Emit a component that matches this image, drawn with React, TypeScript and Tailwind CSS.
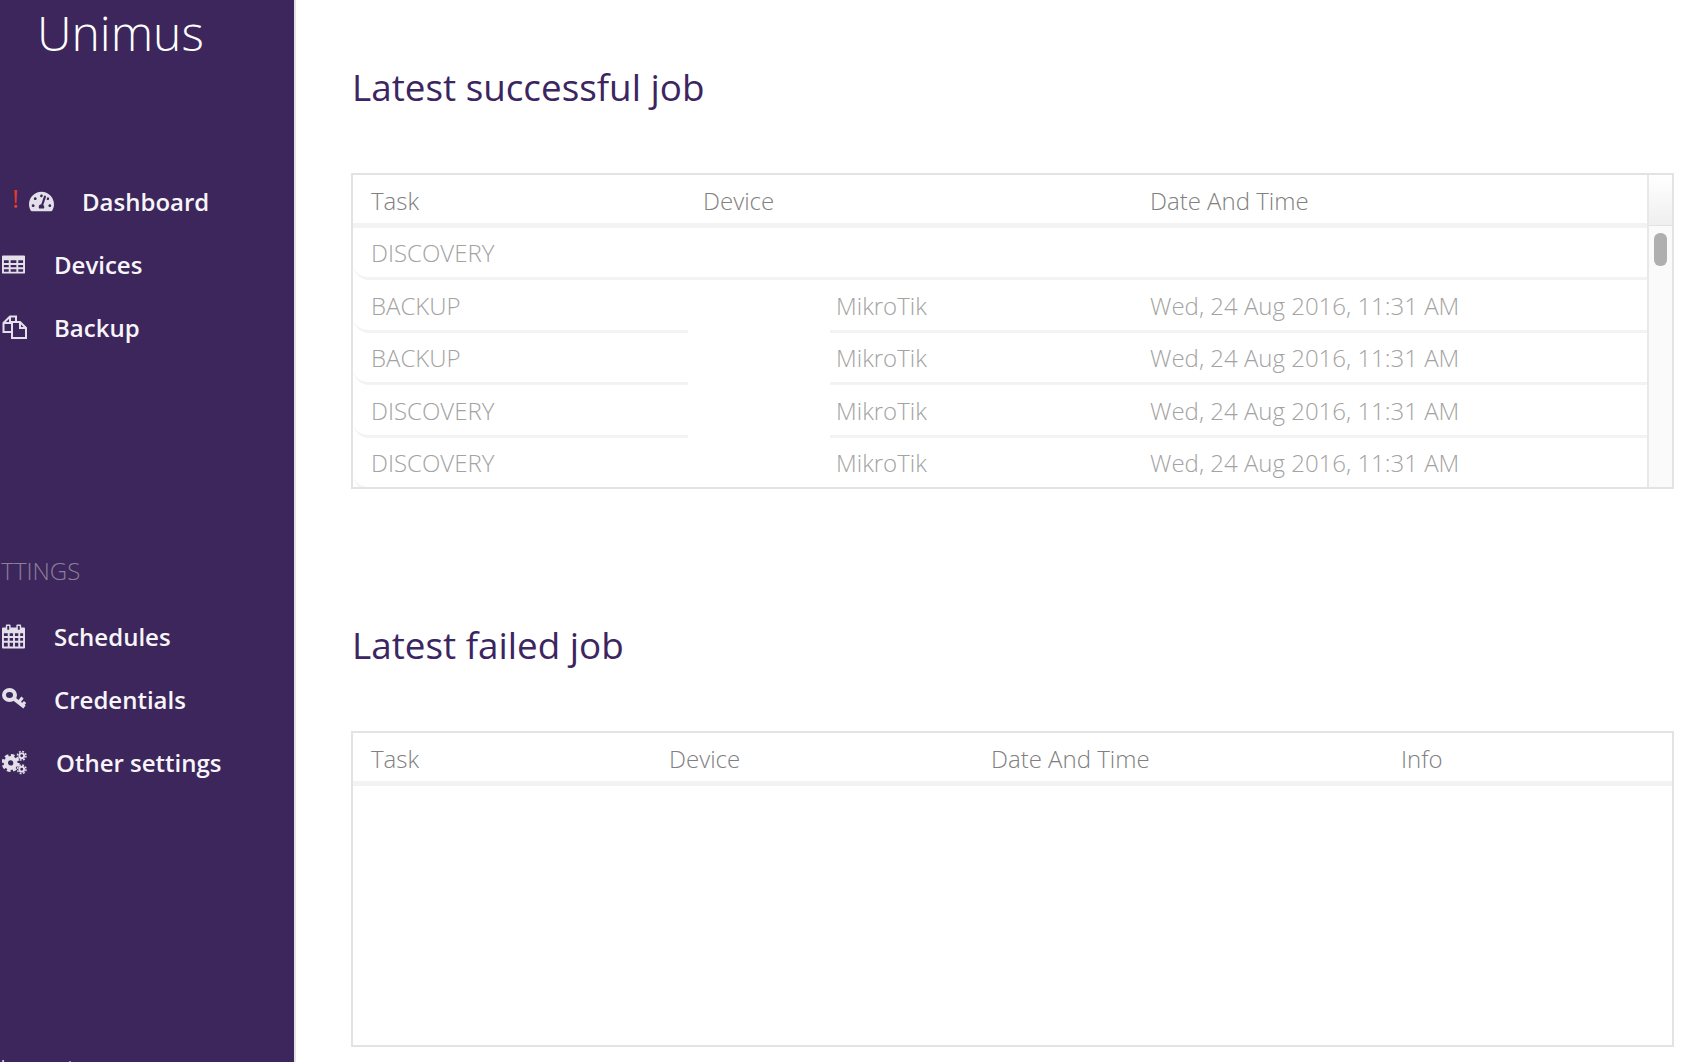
import React from "react";
import { FaTachometerAlt } from "react-icons/fa";

function TableIcon() {
    return (
        <svg viewBox="0 0 24 19" className="w-[23px] h-[19px]" fill="#e4e0ea">
            <path fillRule="evenodd" d="M1 0h22a1 1 0 0 1 1 1v17a1 1 0 0 1-1 1H1a1 1 0 0 1-1-1V1a1 1 0 0 1 1-1ZM2 5v3h5V5H2Zm7 0v3h6V5H9Zm8 0v3h5V5h-5ZM2 10v2.500h5V10H2Zm7 0v2.500h6V10H9Zm8 0v2.500h5V10h-5ZM2 14.500V17h5v-2.500H2Zm7 0V17h6v-2.500H9Zm8 0V17h5v-2.500h-5Z" />
        </svg>
    );
}

function FilesIcon() {
    return (
        <svg viewBox="0 0 25 24" className="w-[25px] h-[24px] -mt-[2px]" fill="none" stroke="#e4e0ea" strokeWidth="2">
            <path d="M9 17H1.500V8L8 1.500h6V6" />
            <path d="M8 2v6H2" />
            <path d="M10 7h8l6 6v10H10Z" />
            <path d="M18 7v6h6" />
        </svg>
    );
}

function CalendarIcon() {
    return (
        <svg viewBox="0 0 24 25" className="w-[23px] h-[25px]" fill="#e4e0ea">
            <path fillRule="evenodd" d="M5 0h3a1 1 0 0 1 1 1v2h6V1a1 1 0 0 1 1-1h3a1 1 0 0 1 1 1v2h3a1 1 0 0 1 1 1v20a1 1 0 0 1-1 1H1a1 1 0 0 1-1-1V4a1 1 0 0 1 1-1h3V1a1 1 0 0 1 1-1ZM5.500 1.500v4h2v-4h-2Zm11 0v4h2v-4h-2ZM2 9v3h4V9H2Zm6 0v3h3.500V9H8Zm5.500 0v3H17V9h-3.500ZM19 9v3h3V9h-3ZM2 14v3h4v-3H2Zm6 0v3h3.500v-3H8Zm5.500 0v3H17v-3h-3.500ZM19 14v3h3v-3h-3ZM2 19v4h4v-4H2Zm6 0v4h3.500v-4H8Zm5.500 0v4H17v-4h-3.500ZM19 19v4h3v-4h-3Z" />
        </svg>
    );
}

function KeyIcon() {
    return (
        <svg viewBox="0 0 24 21" className="w-[24px] h-[21px] -mt-[2px]" fill="none" stroke="#e4e0ea">
            <ellipse cx="7.500" cy="7" rx="5.500" ry="5" strokeWidth="4" />
            <path d="m11 10 11.500 9" strokeWidth="3.600" />
            <path d="m16.500 14.500 4-5M20 17.500l3-3.500" strokeWidth="3" />
        </svg>
    );
}

function CogsIcon() {
    return (
        <svg viewBox="0 0 26 25" className="w-[26px] h-[25px]" fill="none" stroke="#e4e0ea">
            <circle cx="9" cy="13" r="5" strokeWidth="4.500" />
            <circle cx="9" cy="13" r="8" strokeWidth="2.800" strokeDasharray="3.800 2.480" />
            <circle cx="20.500" cy="5.500" r="2.500" strokeWidth="2" />
            <circle cx="20.500" cy="5.500" r="4.500" strokeWidth="1.500" strokeDasharray="2 1.530" />
            <circle cx="20.500" cy="19.500" r="2.500" strokeWidth="2" />
            <circle cx="20.500" cy="19.500" r="4.500" strokeWidth="1.500" strokeDasharray="2 1.530" />
        </svg>
    );
}

const mainNav = [
    { label: "Devices", icon: <TableIcon /> },
    { label: "Backup", icon: <FilesIcon /> },
];

const settingsNav = [
    { label: "Schedules", icon: <CalendarIcon />, textClass: "ml-[27px]" },
    { label: "Credentials", icon: <KeyIcon />, textClass: "ml-[27px]" },
    { label: "Other settings", icon: <CogsIcon />, textClass: "ml-[29px]" },
];

const jobs = [
    { task: "BACKUP", host: "MikroTik" },
    { task: "BACKUP", host: "MikroTik" },
    { task: "DISCOVERY", host: "MikroTik" },
    { task: "DISCOVERY", host: "MikroTik" },
];

const jobDate = "Wed, 24 Aug 2016, 11:31 AM";

export default function App() {
    return (
        <div className="flex h-[1062px] overflow-hidden bg-white font-['Open_Sans',sans-serif]">
            {/* SIDEBAR */}
            <aside className="w-[296px] shrink-0 flex flex-col overflow-hidden bg-[#3c265c] border-r-2 border-[#e3e3e3] text-[#f7f5f9]">
                <div className="h-[170px] shrink-0 pl-[37px]">
                    <div className="text-[48px] leading-[65px] font-light text-white">Unimus</div>
                </div>
                <nav className="flex flex-col">
                    <div className="h-[63px] flex items-center pl-[12px] text-[24px] font-semibold">
                        <span className="w-[10px] text-[26px] font-medium text-[#e8392f] -mt-[6px]">!</span>
                        <FaTachometerAlt className="ml-[7px] text-[25px] text-[#e4e0ea]" />
                        <span className="ml-[28px]">Dashboard</span>
                    </div>
                    {mainNav.map((item) => (
                        <div key={item.label} className="h-[63px] flex items-center pl-[2px] text-[24px] font-semibold">
                            <span className="w-[25px] flex justify-start">{item.icon}</span>
                            <span className="ml-[27px]">{item.label}</span>
                        </div>
                    ))}
                </nav>
                <div className="mt-[194px] h-[36px] -ml-[25px] whitespace-nowrap text-[24px] leading-[36px] font-light text-[#8a8098]">SETTINGS</div>
                <nav className="flex flex-col mt-[16px]">
                    {settingsNav.map((item) => (
                        <div key={item.label} className="h-[63px] flex items-center pl-[2px] text-[24px] font-semibold">
                            <span className="w-[25px] flex justify-start">{item.icon}</span>
                            <span className={item.textClass}>{item.label}</span>
                        </div>
                    ))}
                </nav>
                <div className="mt-[258px] text-[24px] leading-[32px] font-light text-white">Logout</div>
            </aside>

            {/* CONTENT */}
            <main className="flex-1 pl-[55px] pr-[28px]">
                <h1 className="mt-[62px] h-[50px] pl-[1px] text-[36.800px] leading-[50px] font-normal text-[#3c2560]">Latest successful job</h1>

                <div className="mt-[61px] h-[316px] flex border-2 border-[#e3e3e3] text-[24px] overflow-hidden">
                    <div className="flex-1 flex flex-col">
                        <div className="h-[53px] shrink-0 flex items-center border-b-[5px] border-[#f3f3f3] pl-[18px] pt-[4px] text-[#808080] font-light">
                            <span className="w-[332px]">Task</span>
                            <span className="w-[447px]">Device</span>
                            <span>Date And Time</span>
                        </div>
                        <div className="h-[52px] shrink-0 flex items-center border-b-[3px] border-[#f3f3f3] rounded-bl-[16px] pl-[18px] pt-[1px] text-[#a3a3a3] font-light">
                            DISCOVERY
                        </div>
                        {jobs.map((job, index) => (
                            <div key={index} className="h-[52.500px] shrink-0 flex text-[#a3a3a3] font-light">
                                <div className="w-[335px] shrink-0 flex items-center border-b-[3px] border-[#f3f3f3] rounded-bl-[16px] pl-[18px] pt-[2px]">{job.task}</div>
                                <div className="w-[142px] shrink-0" />
                                <div className="flex-1 flex items-center border-b-[3px] border-[#f3f3f3] pt-[2px]">
                                    <span className="w-[320px] pl-[6px]">{job.host}</span>
                                    <span>{jobDate}</span>
                                </div>
                            </div>
                        ))}
                    </div>
                    {/* SCROLLBAR */}
                    <div className="w-[25px] shrink-0 flex flex-col items-center bg-[#fafafa] border-l-2 border-[#e8e8e8]">
                        <div className="w-full h-[51px] shrink-0 bg-gradient-to-b from-white to-[#efefef] border-b border-[#e3e3e3]" />
                        <div className="w-[13px] h-[33px] mt-[7px] rounded-[6px] bg-[#afafaf]" />
                    </div>
                </div>

                <h1 className="mt-[131px] h-[50px] pl-[1px] text-[36.800px] leading-[50px] font-normal text-[#3c2560]">Latest failed job</h1>

                <div className="mt-[61px] h-[316px] border-2 border-[#e3e3e3] text-[24px] font-light text-[#808080]">
                    <div className="h-[53px] flex items-center border-b-[5px] border-[#f3f3f3] pl-[18px] pt-[4px]">
                        <span className="w-[298px]">Task</span>
                        <span className="w-[322px]">Device</span>
                        <span className="w-[410px]">Date And Time</span>
                        <span>Info</span>
                    </div>
                </div>
            </main>
        </div>
    );
}
